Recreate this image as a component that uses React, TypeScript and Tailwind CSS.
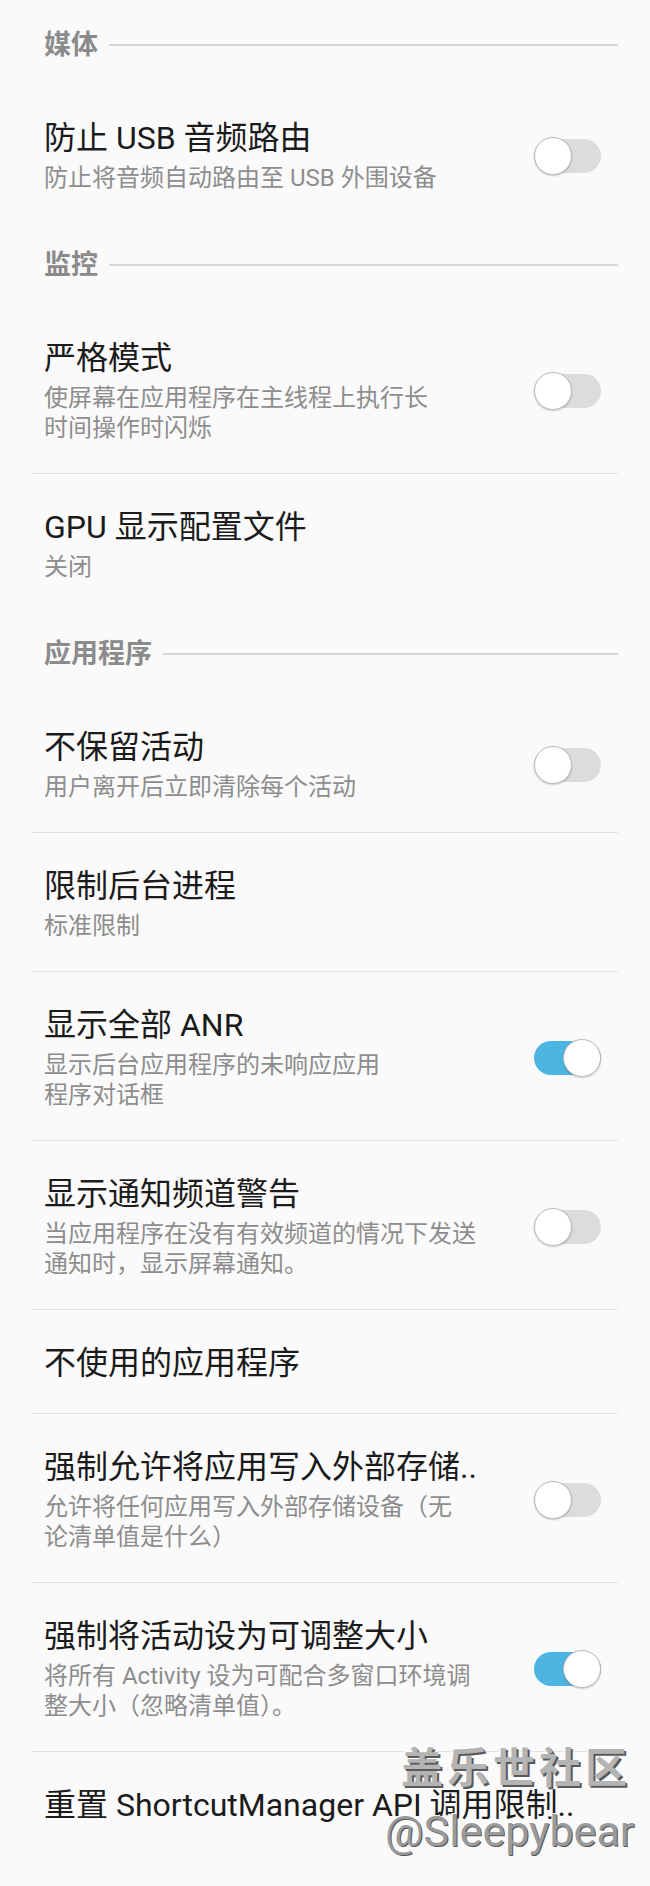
import React from "react";

type Row = {
  title: string;
  sub?: string[];
  toggle?: boolean;
};

type Section = {
  header: string;
  rows: Row[];
};

const sections: Section[] = [
  {
    header: "媒体",
    rows: [
      {
        title: "防止 USB 音频路由",
        sub: ["防止将音频自动路由至 USB 外围设备"],
        toggle: false,
      },
    ],
  },
  {
    header: "监控",
    rows: [
      {
        title: "严格模式",
        sub: ["使屏幕在应用程序在主线程上执行长", "时间操作时闪烁"],
        toggle: false,
      },
      { title: "GPU 显示配置文件", sub: ["关闭"] },
    ],
  },
  {
    header: "应用程序",
    rows: [
      { title: "不保留活动", sub: ["用户离开后立即清除每个活动"], toggle: false },
      { title: "限制后台进程", sub: ["标准限制"] },
      {
        title: "显示全部 ANR",
        sub: ["显示后台应用程序的未响应应用", "程序对话框"],
        toggle: true,
      },
      {
        title: "显示通知频道警告",
        sub: ["当应用程序在没有有效频道的情况下发送", "通知时，显示屏幕通知。"],
        toggle: false,
      },
      { title: "不使用的应用程序" },
      {
        title: "强制允许将应用写入外部存储..",
        sub: ["允许将任何应用写入外部存储设备（无", "论清单值是什么）"],
        toggle: false,
      },
      {
        title: "强制将活动设为可调整大小",
        sub: ["将所有 Activity 设为可配合多窗口环境调", "整大小（忽略清单值）。"],
        toggle: true,
      },
      { title: "重置 ShortcutManager API 调用限制.." },
    ],
  },
];

const Toggle = ({ on }: { on: boolean }) => (
  <div className="relative w-[67px] h-[40px] shrink-0">
    <div
      className={`absolute left-0 right-0 top-[3px] h-[34px] rounded-full ${
        on ? "bg-[#4db5e2]" : "bg-[#dcdcdc]"
      }`}
    />
    <div
      className={`absolute top-[1px] w-[38px] h-[38px] rounded-full bg-white border-[1.5px] border-[#bcbcbc] shadow-[0_1px_2px_rgba(0,0,0,0.2)] ${
        on ? "right-0" : "left-0"
      }`}
    />
  </div>
);

const SettingRow = ({ row, first }: { row: Row; first: boolean }) => (
  <div
    className={`flex items-center pl-[12px] pr-[17px] pb-[30px] ${
      first ? "pt-[34px]" : "pt-[33px] border-t border-[#e3e3e3]"
    }`}
  >
    <div className="flex-1 min-w-0">
      <div className="text-[32px] leading-[40px] text-[#1b1b1b] whitespace-nowrap">
        {row.title}
      </div>
      {row.sub && (
        <div className="mt-[5px]">
          {row.sub.map((line) => (
            <div
              key={line}
              className="text-[24px] leading-[30px] text-[#8d8d8d] whitespace-nowrap"
            >
              {line}
            </div>
          ))}
        </div>
      )}
    </div>
    {row.toggle !== undefined && <Toggle on={row.toggle} />}
  </div>
);

export default function App() {
  return (
    <div
      className="relative min-h-screen bg-[#fafafa] pt-[3px] overflow-hidden"
      style={{ fontFamily: 'Roboto, "Noto Sans CJK SC", sans-serif' }}
    >
      <div className="mx-[32px]">
        {sections.map((section) => (
          <div key={section.header}>
            <div className="flex items-center h-[81px] pt-[3px] pl-[12px]">
              <span className="text-[27px] font-bold text-[#8b8b8b] leading-none">
                {section.header}
              </span>
              <div className="flex-1 h-[2px] bg-[#d6d6d6] ml-[11px]" />
            </div>
            {section.rows.map((row, i) => (
              <SettingRow key={row.title} row={row} first={i === 0} />
            ))}
          </div>
        ))}
      </div>

      {/* watermark over the screenshot */}
      <div className="absolute left-[401px] top-[1748px] text-[42px] leading-none tracking-[4px] text-[#b4b4b4] font-bold [text-shadow:2px_2px_0_#5a5a5a,-1px_-1px_0_#ffffff]">
        盖乐世社区
      </div>
      <div className="absolute left-[385px] top-[1810px] text-[43px] leading-none text-[#9a9a9a] [text-shadow:1px_1px_0_#555555,-1px_-1px_0_#ffffff]">
        @Sleepybear
      </div>
    </div>
  );
}
